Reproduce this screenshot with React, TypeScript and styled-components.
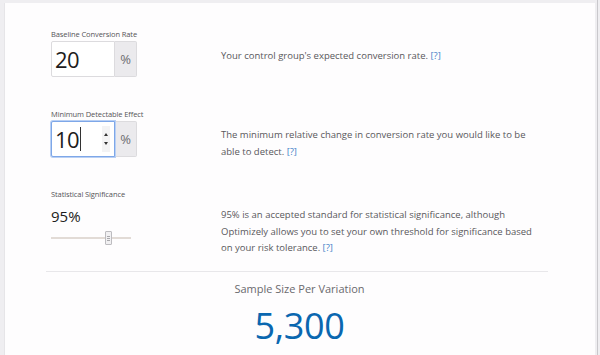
import styled, { createGlobalStyle } from "styled-components";

const GlobalStyle = createGlobalStyle`
  html, body {
    margin: 0;
    padding: 0;
    background: #efeef1;
    font-family: "Open Sans", "Liberation Sans", sans-serif;
  }
`;

export default function App() {
  return (
    <>
      <GlobalStyle />
      <Page>
        <Card>
          <Row>
            <Field>
              <Label>Baseline Conversion Rate</Label>
              <InputGroup>
                <NumberBox>
                  <Value>20</Value>
                </NumberBox>
                <Addon>%</Addon>
              </InputGroup>
            </Field>
            <Description offset={22}>
              Your control group's expected conversion rate. <Help>[?]</Help>
            </Description>
          </Row>

          <Row>
            <Field>
              <Label>Minimum Detectable Effect</Label>
              <InputGroup>
                <NumberBox focused>
                  <Value>10</Value>
                  <Caret />
                  <Spinner>
                    <ArrowUp />
                    <ArrowDown />
                  </Spinner>
                </NumberBox>
                <Addon>%</Addon>
              </InputGroup>
            </Field>
            <Description offset={21}>
              The minimum relative change in conversion rate you would like to be
              <br />
              able to detect. <Help>[?]</Help>
            </Description>
          </Row>

          <Row>
            <Field>
              <Label>Statistical Significance</Label>
              <Percent>95%</Percent>
              <Slider>
                <Track />
                <Thumb style={{ left: `${((95 - 80) / 20) * 72}px` }}>
                  <Grip />
                  <Grip />
                  <Grip />
                </Thumb>
              </Slider>
            </Field>
            <Description offset={21}>
              95% is an accepted standard for statistical significance, although
              <br />
              Optimizely allows you to set your own threshold for significance based
              <br />
              on your risk tolerance. <Help>[?]</Help>
            </Description>
          </Row>

          <Divider />

          <Result>
            <ResultLabel>Sample Size Per Variation</ResultLabel>
            <ResultValue>5,300</ResultValue>
          </Result>
        </Card>
      </Page>
    </>
  );
}

const Page = styled.div`
  height: 355px;
  padding: 3px 2px 0 4px;
  box-sizing: border-box;
  border-right: 1px solid #c9c8cc;
  width: 598px;
  overflow: hidden;
`;

const Card = styled.div`
  background: #fefdfe;
  height: 100%;
  padding: 24px 40px 0 46px;
  box-sizing: border-box;
  border-left: 1px solid #e6e5e8;
`;

const Row = styled.div`
  display: grid;
  grid-template-columns: 170px 1fr;
  height: 80px;
`;

const Field = styled.div`
  display: flex;
  flex-direction: column;
  align-items: flex-start;
`;

const Label = styled.div`
  font-size: 7.5px;
  color: #555458;
  height: 14px;
  line-height: 14px;
  letter-spacing: -0.1px;
`;

const InputGroup = styled.div`
  display: flex;
  height: 36px;
`;

const NumberBox = styled.div<{ focused?: boolean }>`
  display: flex;
  align-items: center;
  width: 64px;
  box-sizing: border-box;
  padding-left: 3px;
  background: #fff;
  border: 1px solid ${(p) => (p.focused ? "#7ea7e8" : "#dcdbde")};
  border-radius: 2px 0 0 2px;
  box-shadow: ${(p) => (p.focused ? "0 0 0 1px #b9d0f4" : "none")};
  position: relative;
  z-index: 1;
`;

const Value = styled.span`
  font-size: 22px;
  color: #1d1c20;
  letter-spacing: -0.5px;
`;

const Caret = styled.span`
  width: 1px;
  height: 24px;
  background: #333;
  margin-left: 1px;
`;

const Spinner = styled.div`
  margin-left: auto;
  margin-right: 4px;
  width: 8px;
  height: 26px;
  background: #f3f3f4;
  display: flex;
  flex-direction: column;
  align-items: center;
  justify-content: center;
  gap: 6px;
`;

const ArrowUp = styled.span`
  width: 0;
  height: 0;
  border-left: 2.5px solid transparent;
  border-right: 2.5px solid transparent;
  border-bottom: 3px solid #333;
`;

const ArrowDown = styled.span`
  width: 0;
  height: 0;
  border-left: 2.5px solid transparent;
  border-right: 2.5px solid transparent;
  border-top: 3px solid #333;
`;

const Addon = styled.div`
  width: 21px;
  display: flex;
  align-items: center;
  justify-content: center;
  background: #ebeaed;
  border: 1px solid #dcdbde;
  border-left: none;
  border-radius: 0 2px 2px 0;
  font-size: 13px;
  color: #6d6c70;
`;

const Percent = styled.div`
  font-size: 15px;
  color: #1d1c20;
  margin-top: 5px;
  line-height: 20px;
`;

const Slider = styled.div`
  position: relative;
  width: 80px;
  height: 16px;
  margin-top: 4px;
  display: flex;
  align-items: center;
`;

const Track = styled.div`
  width: 100%;
  height: 2px;
  background: #e2dbd6;
`;

const Thumb = styled.div`
  position: absolute;
  top: 1px;
  width: 7px;
  height: 14px;
  box-sizing: border-box;
  border: 1px solid #bdbcc0;
  border-radius: 1px;
  background: #f1f0f2;
  display: flex;
  flex-direction: column;
  justify-content: center;
  align-items: center;
  gap: 1px;
`;

const Grip = styled.span`
  width: 3px;
  height: 1px;
  background: #a9a8ac;
`;

const Description = styled.p<{ offset: number }>`
  margin: 0;
  padding-top: ${(p) => p.offset - 1}px;
  font-size: 9.5px;
  line-height: 16.5px;
  color: #59585c;
  white-space: nowrap;
`;

const Help = styled.span`
  color: #3f7fc8;
`;

const Divider = styled.div`
  height: 1px;
  background: #e8e7ea;
  margin: 4px 0 0 -5px;
  width: 502px;
`;

const Result = styled.div`
  display: flex;
  flex-direction: column;
  align-items: center;
  width: 497px;
`;

const ResultLabel = styled.div`
  margin-top: 10px;
  font-size: 11px;
  line-height: 14px;
  color: #6a696d;
`;

const ResultValue = styled.div`
  margin-top: 7px;
  font-size: 36px;
  line-height: 46px;
  color: #0a67b0;
  letter-spacing: -0.3px;
`;
